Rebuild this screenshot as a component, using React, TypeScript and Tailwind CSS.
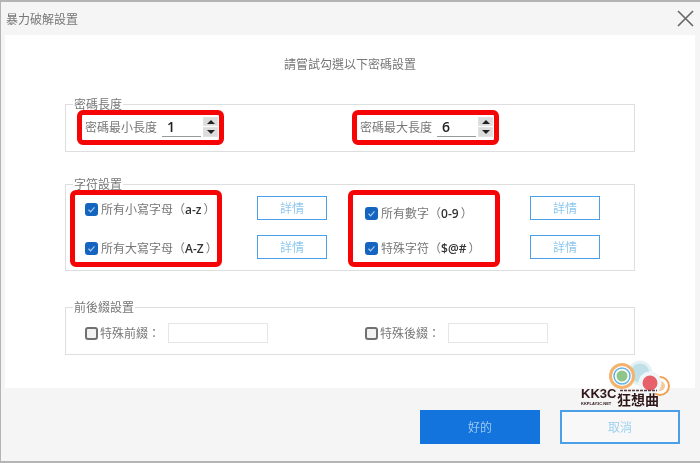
const cjk = "font-['Noto_Sans_CJK_TC','Noto_Sans',sans-serif]";

function Spinner() {
  return (
    <div className="ml-[2px] flex w-[15px] flex-col gap-[1px]">
      <div className="flex h-[9px] items-center justify-center border border-[#e2e2e2] bg-[#dcdcdc]">
        <div className="h-0 w-0 border-x-[4px] border-b-[4px] border-x-transparent border-b-[#222]" />
      </div>
      <div className="flex h-[10px] items-center justify-center border border-[#e2e2e2] bg-[#dcdcdc]">
        <div className="h-0 w-0 border-x-[4px] border-t-[4px] border-x-transparent border-t-[#222]" />
      </div>
    </div>
  );
}

function LengthField({ label, value, width }: { label: string; value: string; width: string }) {
  return (
    <div className={`flex items-center ${width}`}>
      <span className="w-[77px] text-[12px] text-[#777]">{label}</span>
      <input
        readOnly
        value={value}
        className="h-[20px] w-[39px] border-b border-[#999] bg-white pl-[5px] font-['Open_Sans',sans-serif] text-[14px] font-semibold text-[#222] outline-none"
      />
      <Spinner />
    </div>
  );
}

function Check({ checked }: { checked?: boolean }) {
  if (!checked) {
    return <span className="h-[13px] w-[13px] shrink-0 rounded-[3px] border-2 border-[#707070] bg-[#f2f2f2]" />;
  }
  return (
    <span className="flex h-[13px] w-[13px] shrink-0 items-center justify-center rounded-[3px] bg-[#1565c0]">
      <svg width="9" height="9" viewBox="0 0 9 9" fill="none">
        <path d="M1.5 4.8 3.6 6.8 7.5 2.4" stroke="#a9cdf2" strokeWidth="1.2" />
      </svg>
    </span>
  );
}

function CheckLabel({ text, code }: { text: string; code?: string }) {
  return (
    <div className="flex items-center gap-[3px]">
      <Check checked />
      <span className="whitespace-nowrap text-[12px] text-[#777]">
        {text}（<span className="pr-[2px] font-['Open_Sans',sans-serif] font-semibold text-[#333]">{code}</span>）
      </span>
    </div>
  );
}

function DetailButton() {
  return (
    <button className="h-[24px] w-[70px] border border-[#4a9fe8] bg-white text-[12px] text-[#8fc8ee]">詳情</button>
  );
}

function Fieldset({ title, height, children }: { title: string; height: string; children: React.ReactNode }) {
  return (
    <fieldset className={`mx-[60px] w-[570px] border border-[#dedede] ${height}`}>
      <legend className="ml-[7px] px-[1px] text-[12px] leading-[14px] text-[#777]">{title}</legend>
      {children}
    </fieldset>
  );
}

function RedBox({ className }: { className: string }) {
  return <div className={`absolute rounded-[6px] border-[5px] border-[#f50505] ${className}`} />;
}

function Watermark() {
  return (
    <div className="absolute left-[578px] top-[358px] h-[46px] w-[96px]">
      <svg className="absolute left-0 top-0" width="96" height="36" viewBox="0 0 96 36">
        <circle cx="62" cy="13" r="11" fill="#bfe0e6" stroke="#e4f2f4" strokeWidth="3" />
        <circle cx="82" cy="26" r="9" fill="#fff" stroke="#f0a050" strokeWidth="2" />
        <circle cx="82" cy="26" r="5" fill="#f6c79a" />
        <circle cx="72" cy="23" r="9.5" fill="#e8606a" stroke="#eef6f7" strokeWidth="4" />
        <circle cx="44" cy="16" r="11.5" fill="#fff" stroke="#f5b26c" strokeWidth="3" />
        <circle cx="44" cy="16" r="8" fill="#fff" stroke="#5fb3e6" strokeWidth="1.5" />
        <circle cx="44" cy="16" r="5.5" fill="#8fc58a" />
        <path d="M42 30.5H79" stroke="#5a3a3c" strokeWidth="1.5" strokeDasharray="3 1" />
      </svg>
      <span className="absolute left-[3px] top-[28px] font-['Liberation_Sans',sans-serif] text-[13px] font-bold leading-[12px] text-[#2e1518]">
        KK3C
      </span>
      <span className="absolute left-[3px] top-[41px] font-['Liberation_Sans',sans-serif] text-[4px] font-bold leading-[5px] text-[#2e1518]">
        KKPLAY3C.NET
      </span>
      <span className="absolute left-[39px] top-[32px] whitespace-nowrap text-[14px] font-bold leading-[14px] text-[#2e1518]">
        狂想曲
      </span>
    </div>
  );
}

export default function App() {
  return (
    <div className={`relative flex h-[463px] w-[700px] flex-col overflow-hidden border-y-2 border-[#b4b4b4] bg-[#f5f5f5] shadow-[inset_1px_0_0_#b4b4b4] blur-[0.4px] ${cjk}`}>
      <div className="flex h-[33px] items-center justify-between pl-[6px] pr-[6px]">
        <span className="text-[12px] text-[#777]">暴力破解設置</span>
        <svg width="17" height="17" viewBox="0 0 17 17" fill="none">
          <path d="M1 1 16 16M16 1 1 16" stroke="#666" strokeWidth="1.6" />
        </svg>
      </div>

      <div className="mx-[5px] flex h-[353px] flex-col bg-white">
        <div className="h-[62px] pt-[20px] text-center text-[12px] leading-[17px] text-[#777]">請嘗試勾選以下密碼設置</div>

        <Fieldset title="密碼長度" height="h-[55px]">
          <div className="flex pl-[19px] pt-[6px]">
            <LengthField label="密碼最小長度" value="1" width="w-[275px]" />
            <LengthField label="密碼最大長度" value="6" width="w-[240px]" />
          </div>
        </Fieldset>

        <div className="mt-[25px]">
          <Fieldset title="字符設置" height="h-[94px]">
            <div className="flex pl-[19px] pt-[5px]">
              <div className="flex w-[280px] flex-col gap-[15px]">
                <div className="flex h-[24px] items-center justify-between pr-[38px]">
                  <div className="pt-[2px]"><CheckLabel text="所有小寫字母" code="a-z" /></div>
                  <DetailButton />
                </div>
                <div className="flex h-[24px] items-center justify-between pr-[38px]">
                  <div className="pt-[2px]"><CheckLabel text="所有大寫字母" code="A-Z" /></div>
                  <DetailButton />
                </div>
              </div>
              <div className="flex w-[235px] flex-col gap-[15px]">
                <div className="flex h-[24px] items-center justify-between">
                  <div className="pt-[10px]"><CheckLabel text="所有數字" code="0-9" /></div>
                  <DetailButton />
                </div>
                <div className="flex h-[24px] items-center justify-between">
                  <div className="pt-[2px]"><CheckLabel text="特殊字符" code="$@#" /></div>
                  <DetailButton />
                </div>
              </div>
            </div>
          </Fieldset>
        </div>

        <div className="mt-[29px]">
          <Fieldset title="前後綴設置" height="h-[55px]">
            <div className="flex pl-[19px] pt-[9px]">
              <div className="flex w-[280px] items-center gap-[2px]">
                <Check />
                <span className="w-[66px] text-[12px] text-[#777]">特殊前綴：</span>
                <div className="h-[20px] w-[100px] border border-[#e6e6e6] bg-white" />
              </div>
              <div className="flex items-center gap-[2px]">
                <Check />
                <span className="w-[66px] text-[12px] text-[#777]">特殊後綴：</span>
                <div className="h-[20px] w-[100px] border border-[#e6e6e6] bg-white" />
              </div>
            </div>
          </Fieldset>
        </div>
      </div>

      <div className="flex flex-1 justify-end gap-[20px] pr-[20px] pt-[22px]">
        <button className="h-[34px] w-[120px] bg-[#1274dc] text-[12px] text-[#9cc6f0]">好的</button>
        <button className="h-[34px] w-[120px] border-2 border-[#4a9fe8] bg-[#f8f8f8] text-[12px] text-[#9bd0ef]">取消</button>
      </div>

      <RedBox className="left-[77px] top-[108px] h-[35px] w-[147px]" />
      <RedBox className="left-[352px] top-[108px] h-[35px] w-[147px]" />
      <RedBox className="left-[70px] top-[188px] h-[77px] w-[152px]" />
      <RedBox className="left-[348px] top-[188px] h-[77px] w-[152px]" />
      <Watermark />
    </div>
  );
}
